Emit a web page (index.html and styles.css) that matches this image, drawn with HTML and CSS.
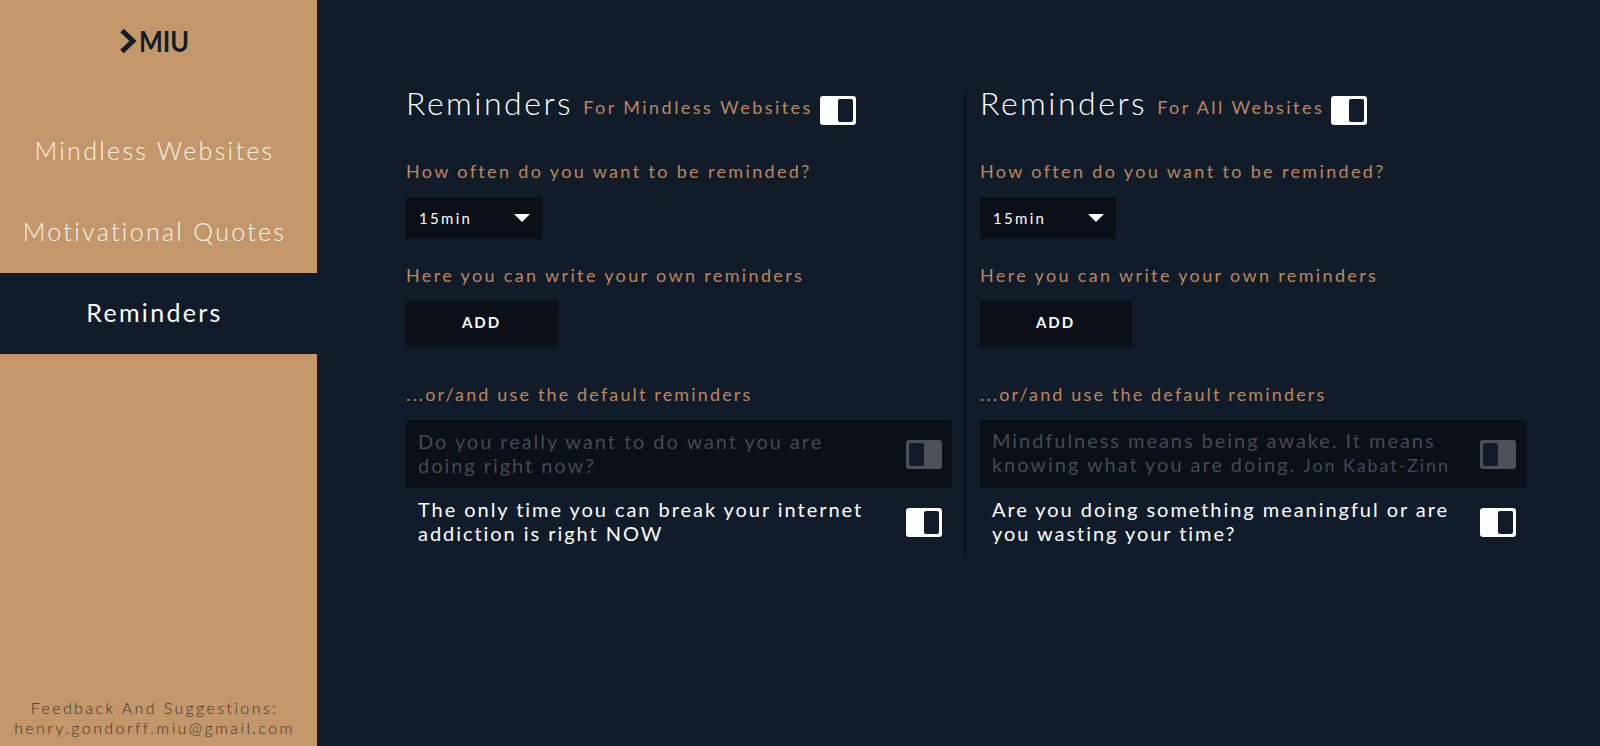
FILE: index.html
```html
<!DOCTYPE html>
<html lang="en">

<head>
    <meta charset="UTF-8">
    <title>MIU | Reminders</title>
    <link rel="stylesheet" href="styles.css">
</head>

<body>
    <div id="sidebar">
        <div class="logo">
            <svg class="logo-arrow" width="17" height="26" viewBox="0 0 17 26">
                <path d="M2 2.5 L13 13 L2 23.5" fill="none" stroke="#111c2b" stroke-width="5" />
            </svg>
            <span class="logo-text">MIU</span>
        </div>

        <div class="nav">
            <div class="nav-item">Mindless Websites</div>
            <div class="nav-item">Motivational Quotes</div>
            <div class="nav-item active">Reminders</div>
        </div>

        <div class="feedback">Feedback And Suggestions:<br>henry.gondorff.miu@gmail.com</div>
    </div>

    <div id="main">
        <div class="column first">
            <div class="head">
                <span class="title">Reminders</span>
                <span class="subtitle">For Mindless Websites</span>
                <div class="toggle"><span></span></div>
            </div>

            <div class="label">How often do you want to be reminded?</div>
            <div class="select"><span>15min</span><i class="caret"></i></div>

            <div class="label second">Here you can write your own reminders</div>
            <div class="add">ADD</div>

            <div class="label third">...or/and use the default reminders</div>
            <div class="row off">
                <div class="row-text">Do you really want to do want you are doing right now?</div>
                <div class="toggle"><span></span></div>
            </div>
            <div class="row">
                <div class="row-text">The only time you can break your internet addiction is right NOW</div>
                <div class="toggle"><span></span></div>
            </div>
        </div>

        <div class="column">
            <div class="head">
                <span class="title">Reminders</span>
                <span class="subtitle">For All Websites</span>
                <div class="toggle"><span></span></div>
            </div>

            <div class="label">How often do you want to be reminded?</div>
            <div class="select"><span>15min</span><i class="caret"></i></div>

            <div class="label second">Here you can write your own reminders</div>
            <div class="add">ADD</div>

            <div class="label third">...or/and use the default reminders</div>
            <div class="row off">
                <div class="row-text">Mindfulness means being awake. It means knowing what you are doing. <small>Jon Kabat-Zinn</small></div>
                <div class="toggle"><span></span></div>
            </div>
            <div class="row">
                <div class="row-text">Are you doing something meaningful or are you wasting your time?</div>
                <div class="toggle"><span></span></div>
            </div>
        </div>
    </div>
</body>

</html>
```

FILE: styles.css
```css
* {
    margin: 0;
    padding: 0;
    box-sizing: border-box;
}

html,
body {
    height: 100%;
    overflow: hidden;
}

body {
    display: flex;
    background-color: #111c2b;
    font-family: Lato, "Open Sans", sans-serif;
    color: #fff;
}

/* --------  SIDEBAR ------------------- */
#sidebar {
    width: 317px;
    flex-shrink: 0;
    display: flex;
    flex-direction: column;
    background-color: #c39769;
}

.logo {
    height: 111px;
    display: flex;
    align-items: flex-start;
    gap: 2px;
    padding: 28px 0 0 120px;
    color: #111c2b;
    font-size: 29px;
    font-weight: 700;
    line-height: 26px;
}

.logo-text {
    display: inline-block;
    transform: scaleX(0.87);
    transform-origin: left center;
}

.nav-item {
    height: 81px;
    display: flex;
    align-items: center;
    justify-content: center;
    padding: 0 8px 3px 0;
    font-size: 25px;
    font-weight: 300;
    letter-spacing: 2.3px;
    color: #fbf3ea;
}

.nav-item.active {
    background-color: #111c2b;
    color: #fff;
    font-weight: 400;
}

.feedback {
    margin-top: auto;
    padding: 0 8px 8px 0;
    text-align: center;
    font-size: 16px;
    font-weight: 300;
    line-height: 20px;
    letter-spacing: 2.4px;
    color: #3a352e;
}

/* --------  MAIN ------------------- */
#main {
    display: flex;
    align-items: flex-start;
    padding: 92px 0 0 89px;
}

.column {
    width: 546px;
    height: 465px;
}

.column.first {
    width: 560px;
    padding-right: 12px;
    border-right: 2px solid #0a111c;
    margin-right: 14px;
}

.head {
    height: 30px;
    display: flex;
    align-items: center;
    white-space: nowrap;
}

.title {
    font-size: 32px;
    font-weight: 300;
    letter-spacing: 2.5px;
    margin-right: 10px;
    position: relative;
    top: -5px;
}

.subtitle {
    font-size: 18px;
    letter-spacing: 2.45px;
    color: #bf8558;
    margin-right: 7px;
}

.head .toggle {
    position: relative;
    top: 3px;
}

.label {
    margin-top: 37px;
    margin-bottom: 14px;
    font-size: 18px;
    line-height: 24px;
    letter-spacing: 2.35px;
    color: #bf8558;
    white-space: nowrap;
}

.label.second {
    margin-top: 24px;
}

.label.third {
    margin-top: 36px;
    letter-spacing: 2.15px;
}

.select {
    width: 136px;
    height: 42px;
    display: flex;
    align-items: center;
    justify-content: space-between;
    padding: 0 12px 0 13px;
    background-color: #0a0f18;
    border-radius: 2px;
    font-size: 15px;
    letter-spacing: 2.3px;
}

.caret {
    width: 0;
    height: 0;
    border-left: 8px solid transparent;
    border-right: 8px solid transparent;
    border-top: 8px solid #fff;
}

.add {
    width: 152px;
    height: 45px;
    display: flex;
    align-items: center;
    justify-content: center;
    padding: 0 1px 3px 0;
    background-color: #0a0f18;
    border-radius: 2px;
    box-shadow: 0 1px 4px rgba(0, 0, 0, 0.25);
    font-size: 15px;
    font-weight: 700;
    letter-spacing: 2px;
}

.row {
    display: flex;
    align-items: center;
    justify-content: space-between;
    height: 68px;
    padding: 0 10px 0 12px;
    border-radius: 2px;
    font-size: 20px;
    line-height: 24px;
    letter-spacing: 1.95px;
}

.row-text {
    width: 468px;
    margin-top: -3px;
}

.row small {
    font-size: 18px;
    letter-spacing: 1.9px;
}

.row.off {
    background-color: #0a1018;
    color: #45494f;
}

.toggle {
    width: 36px;
    height: 29px;
    flex-shrink: 0;
    display: flex;
    justify-content: flex-end;
    padding: 3px;
    background-color: #fff;
    border-radius: 3px;
}

.toggle span {
    width: 15px;
    height: 23px;
    background-color: #111c2b;
    border-radius: 2px;
}

.row.off .toggle {
    justify-content: flex-start;
    background-color: #4d5157;
}
```
